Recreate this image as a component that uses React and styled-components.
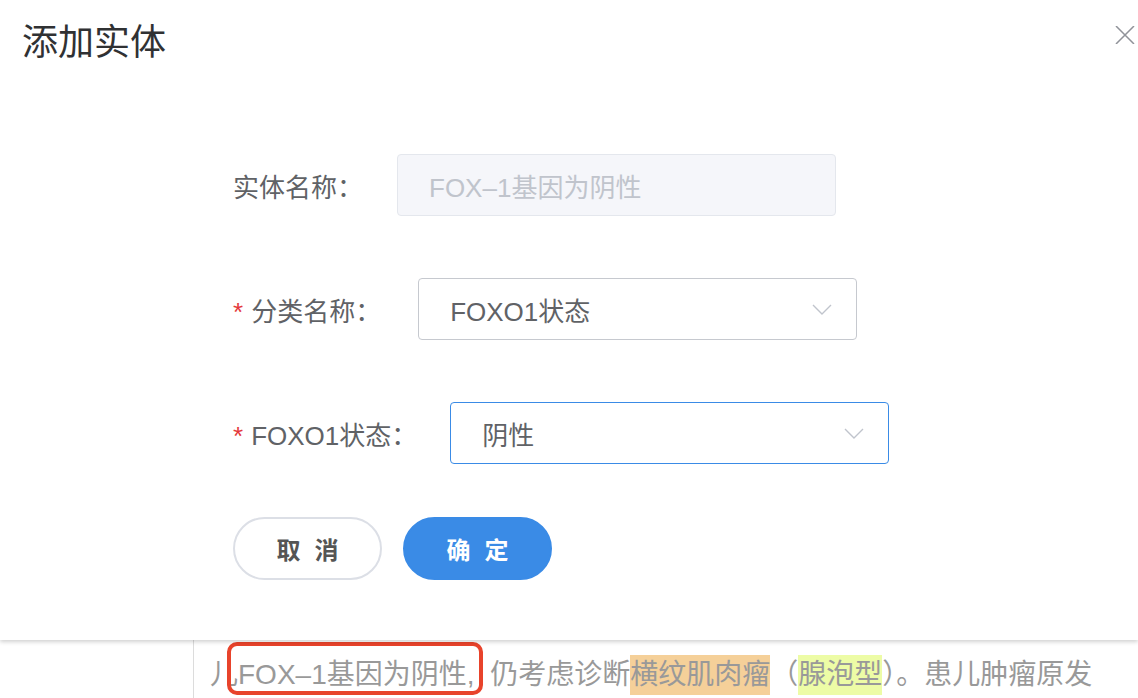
import React from 'react';
import styled, { createGlobalStyle } from 'styled-components';

const GlobalStyle = createGlobalStyle`
    html, body {
        margin: 0;
        padding: 0;
        background: #fff;
        font-family: "Liberation Sans", "Noto Sans CJK SC", sans-serif;
    }
    * { box-sizing: border-box; }
`;

const Page = styled.div`
    width: 1138px;
    height: 698px;
    overflow: hidden;
    display: flex;
    flex-direction: column;
`;

const Dialog = styled.div`
    height: 640px;
    flex-shrink: 0;
    background: #fff;
    box-shadow: 0 2px 4px rgba(0, 0, 0, 0.18);
    position: relative;
    z-index: 2;
`;

const Header = styled.div`
    display: flex;
    justify-content: space-between;
    align-items: flex-start;
    padding: 18px 3px 0 22px;
`;

const Title = styled.h2`
    margin: 0;
    font-size: 36px;
    font-weight: 400;
    line-height: 50px;
    color: #303133;
`;

const CloseBtn = styled.button`
    border: none;
    background: transparent;
    padding: 0;
    margin-top: 8px;
    width: 20px;
    height: 18px;
    cursor: pointer;
    svg { display: block; }
`;

const Form = styled.div`
    display: flex;
    flex-direction: column;
    align-items: flex-start;
    padding: 86px 0 0 233px;
`;

const Row = styled.div`
    display: flex;
    align-items: center;
    height: 62px;
    margin-bottom: 62px;

    &:nth-of-type(3) {
        margin-bottom: 53px;
    }
`;

const Label = styled.label`
    font-size: 26px;
    color: #606266;
    padding-right: ${p => p.$gap}px;
    white-space: nowrap;
`;

const Star = styled.span`
    color: #e4393c;
    margin-right: 8px;
`;

const Field = styled.div`
    width: 439px;
    height: 62px;
    display: flex;
    align-items: center;
    justify-content: space-between;
    padding: 0 24px 0 31px;
    border: 1px solid ${p => p.$focus ? '#3a8be6' : p.$disabled ? '#e4e7ed' : '#c6c9cf'};
    border-radius: 4px;
    background: ${p => p.$disabled ? '#f5f6fa' : '#fff'};
    font-size: 26px;
    color: ${p => p.$disabled ? '#c0c4cc' : '#606266'};
`;

const Buttons = styled.div`
    display: flex;
    gap: 21px;
`;

const Button = styled.button`
    width: 149px;
    height: 63px;
    border-radius: 32px;
    border: 2px solid ${p => p.$primary ? '#3a8be6' : '#dcdfe6'};
    background: ${p => p.$primary ? '#3a8be6' : '#fff'};
    color: ${p => p.$primary ? '#fff' : '#555'};
    font-family: "Liberation Sans", "Noto Sans CJK SC", sans-serif;
    font-size: 24px;
    font-weight: 700;
    letter-spacing: 14px;
    padding: 0 0 0 14px;
    cursor: pointer;
`;

const Doc = styled.div`
    flex: 1;
    display: flex;
`;

const Gutter = styled.div`
    width: 194px;
    flex-shrink: 0;
    border-right: 1px solid #dcdcdc;
`;

const Text = styled.p`
    margin: 0;
    padding: 15px 0 0 16px;
    font-size: 28px;
    line-height: 40px;
    color: #999;
    white-space: nowrap;
`;

const Marked = styled.span`
    position: relative;
    margin-right: 8px;
    &::after {
        content: "";
        position: absolute;
        left: -11px;
        right: -8px;
        top: -17px;
        bottom: -5px;
        border: 4px solid #e8432b;
        border-radius: 10px;
    }
`;

const Hl = styled.span`
    background: ${p => p.$color};
    display: inline-block;
`;

function Chevron() {
    return (
        <svg width="20" height="11" viewBox="0 0 20 11">
            <path d="M1 1 L10 10 L19 1" fill="none" stroke="#c0c4cc" strokeWidth="1.4" />
        </svg>
    );
}

export default function App() {
    return (
        <Page>
            <GlobalStyle />
            <Dialog>
                <Header>
                    <Title>添加实体</Title>
                    <CloseBtn aria-label="close">
                        <svg width="20" height="18" viewBox="0 0 20 18">
                            <path d="M1 0 L19 18 M19 0 L1 18" stroke="#909399" strokeWidth="1.5" />
                        </svg>
                    </CloseBtn>
                </Header>

                <Form>
                    <Row>
                        <Label $gap={34}>实体名称：</Label>
                        <Field $disabled>FOX–1基因为阴性</Field>
                    </Row>
                    <Row>
                        <Label $gap={37}><Star>*</Star>分类名称：</Label>
                        <Field>FOXO1状态<Chevron /></Field>
                    </Row>
                    <Row>
                        <Label $gap={33}><Star>*</Star>FOXO1状态：</Label>
                        <Field $focus>阴性<Chevron /></Field>
                    </Row>
                    <Buttons>
                        <Button>取消</Button>
                        <Button $primary>确定</Button>
                    </Buttons>
                </Form>
            </Dialog>

            <Doc>
                <Gutter />
                <Text>
                    儿<Marked>FOX–1基因为阴性,</Marked> 仍考虑诊断<Hl $color="#f5d099">横纹肌肉瘤</Hl>（<Hl $color="#edfca6">腺泡型</Hl>）。患儿肿瘤原发
                </Text>
            </Doc>
        </Page>
    );
}
